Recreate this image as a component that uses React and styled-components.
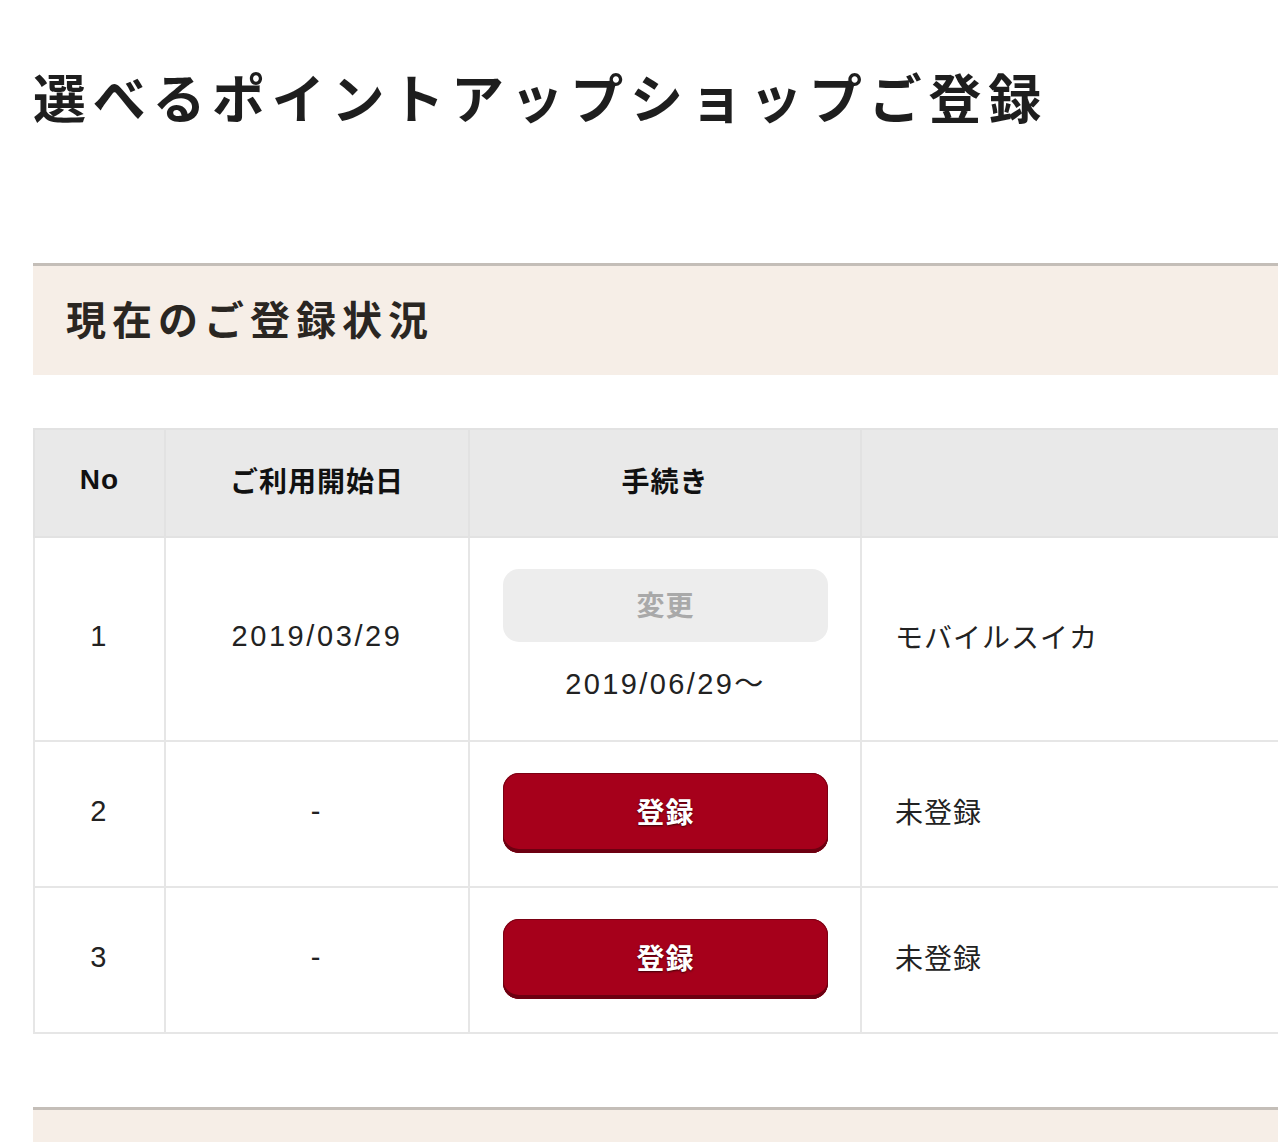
import React from 'react';
import styled, { createGlobalStyle } from 'styled-components';

const GlobalStyle = createGlobalStyle`
  html, body {
    margin: 0;
    padding: 0;
    background: #fff;
    overflow: hidden;
  }
  body {
    font-family: "Liberation Sans", "Noto Sans CJK JP", sans-serif;
    color: #222;
  }
`;

const rows = [
  { no: 1, start: '2019/03/29', state: 'change', since: '2019/06/29〜', shop: 'モバイルスイカ' },
  { no: 2, start: '-', state: 'register', shop: '未登録' },
  { no: 3, start: '-', state: 'register', shop: '未登録' }
];

class App extends React.Component {
  render() {
    return (
      <PageStyle>
        <GlobalStyle />
        <TitleStyle>選べるポイントアップショップご登録</TitleStyle>

        <SectionHeadStyle>
          <h2>現在のご登録状況</h2>
        </SectionHeadStyle>

        <TableStyle>
          <colgroup>
            <col style={{ width: 131 }} />
            <col style={{ width: 304 }} />
            <col style={{ width: 392 }} />
            <col />
          </colgroup>
          <thead>
            <tr>
              <HeadCell>No</HeadCell>
              <HeadCell>ご利用開始日</HeadCell>
              <HeadCell>手続き</HeadCell>
              <HeadCell></HeadCell>
            </tr>
          </thead>
          <tbody>
            {rows.map((row) => (
              <tr key={row.no}>
                <Cell center numeric>{row.no}</Cell>
                <Cell center numeric>{row.start}</Cell>
                <ActionCell>
                  {row.state === 'change' ? (
                    <>
                      <DisabledButton disabled>変更</DisabledButton>
                      <SinceStyle>{row.since}</SinceStyle>
                    </>
                  ) : (
                    <RegisterButton>登録</RegisterButton>
                  )}
                </ActionCell>
                <Cell>{row.shop}</Cell>
              </tr>
            ))}
          </tbody>
        </TableStyle>

        <SectionHeadStyle next />
      </PageStyle>
    );
  }
}

var PageStyle = styled.div`
  width: 1500px;
  padding: 64px 0 0 33px;
`;

var TitleStyle = styled.h1`
  margin: 0;
  font-family: "Noto Sans CJK JP", sans-serif;
  font-size: 53px;
  line-height: 64px;
  font-weight: 700;
  letter-spacing: 6.7px;
  color: #1e1e1e;
`;

var SectionHeadStyle = styled.div`
  margin-top: ${(p) => (p.next ? '73px' : '135px')};
  border-top: 3px solid #c4beb8;
  background: #f6eee7;
  height: ${(p) => (p.next ? '40px' : '112px')};
  display: flex;
  align-items: center;
  padding: 0 0 6px 33px;
  box-sizing: border-box;

  h2 {
    margin: 0;
    font-family: "Noto Sans CJK JP", sans-serif;
    font-size: 40px;
    font-weight: 700;
    letter-spacing: 6px;
    color: #2a2622;
  }
`;

var TableStyle = styled.table`
  margin-top: 53px;
  width: 100%;
  border-collapse: collapse;
  table-layout: fixed;
  font-size: 28px;
  letter-spacing: 1px;
  color: #222;
`;

var HeadCell = styled.th`
  height: 100px;
  padding: 0 0 6px;
  background: #e9e9e9;
  border: 2px solid #e2e2e2;
  font-size: 28px;
  font-weight: 700;
  text-align: center;
  color: #111;
`;

var Cell = styled.td`
  border: 2px solid #e6e6e6;
  text-align: ${(p) => (p.center ? 'center' : 'left')};
  padding: 0 ${(p) => (p.center ? '0' : '33px')} 6px;
  vertical-align: middle;
  font-size: ${(p) => (p.numeric ? '29px' : '28px')};
  letter-spacing: ${(p) => (p.numeric ? '2.6px' : '1px')};
`;

var ActionCell = styled.td`
  border: 2px solid #e6e6e6;
  padding: 31px 32px 33px 33px;
  text-align: center;
`;

var ButtonBase = styled.button`
  display: block;
  width: 100%;
  border: none;
  border-radius: 16px;
  font-family: "Noto Sans CJK JP", sans-serif;
  font-size: 28px;
  font-weight: 700;
  letter-spacing: 1px;
  padding: 0 0 4px;
`;

var DisabledButton = styled(ButtonBase)`
  height: 73px;
  background: #ededed;
  color: #a9a9a9;
`;

var RegisterButton = styled(ButtonBase)`
  height: 80px;
  background: #a6001b;
  color: #fff;
  box-shadow: inset 0 -4px 0 #6d0011, inset 0 0 0 1px #7a0013;
  text-shadow: 0 1px 2px #3a0008;
`;

var SinceStyle = styled.div`
  margin-top: 24px;
  line-height: 36px;
  font-size: 29px;
  letter-spacing: 2.4px;
  margin-bottom: 5px;
`;

export default App;
